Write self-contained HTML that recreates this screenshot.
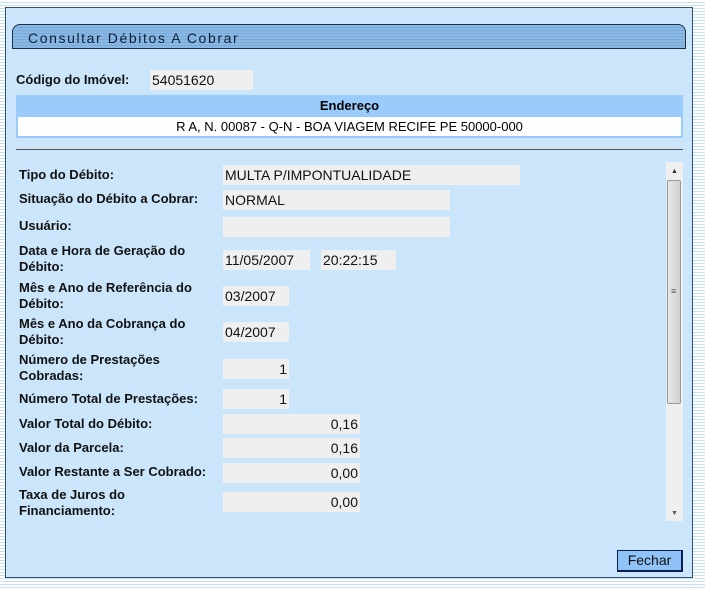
<!DOCTYPE html>
<html><head><meta charset="utf-8"><style>
body{margin:0;width:705px;height:590px;overflow:hidden;background:repeating-linear-gradient(#fff 0,#fff 2px,#c6e0f7 2px,#c6e0f7 3px);font-family:"Liberation Sans",Arial,sans-serif;position:relative}
.panel{position:absolute;left:5px;top:7px;width:686px;height:569px;background:#cbe5fb;border:1px solid #30506e}
.hdr{position:absolute;left:12px;top:24px;width:674px;height:25px;border:1px solid #1d2f44;border-radius:8px 8px 0 0;background:repeating-linear-gradient(#8ab8e4 0,#8ab8e4 2px,#7aaad8 2px,#7aaad8 3px);font-size:14px;letter-spacing:1.6px;color:#0d1f33;line-height:27px;padding-left:15px;box-sizing:border-box}
.a{position:absolute}
.l{position:absolute;left:19px;font-size:13px;font-weight:bold;color:#111;line-height:16px}
.f{position:absolute;left:223px;height:20px;background:#efefef;font-size:14px;line-height:21px;padding:0 2px;box-sizing:border-box;color:#111}
.r{text-align:right}
</style></head><body>
<div class="panel"></div>
<div class="hdr">Consultar Débitos A Cobrar</div>
<div class="l" style="top:72px;left:16px">Código do Imóvel:</div>
<div class="f" style="left:150px;top:70px;width:103px">54051620</div>
<div class="a" style="left:16px;top:95px;width:667px;height:43px;background:#99cbfb"></div>
<div class="a" style="left:16px;top:98px;width:667px;text-align:center;font-size:13px;font-weight:bold;line-height:16px">Endereço</div>
<div class="a" style="left:18px;top:117px;width:663px;height:19px;background:#fff;text-align:center;font-size:13px;line-height:19px">R A, N. 00087 - Q-N - BOA VIAGEM RECIFE PE 50000-000</div>
<div class="a" style="left:16px;top:149px;width:667px;height:1px;background:#555"></div>

<div class="l" style="top:167px">Tipo do Débito:</div>
<div class="f" style="top:165px;width:297px">MULTA P/IMPONTUALIDADE</div>
<div class="l" style="top:191px">Situação do Débito a Cobrar:</div>
<div class="f" style="top:190px;width:227px">NORMAL</div>
<div class="l" style="top:218px">Usuário:</div>
<div class="f" style="top:217px;width:227px"></div>
<div class="l" style="top:243px">Data e Hora de Geração do<br>Débito:</div>
<div class="f" style="top:250px;width:87px">11/05/2007</div>
<div class="f" style="left:321px;top:250px;width:75px">20:22:15</div>
<div class="l" style="top:280px">Mês e Ano de Referência do<br>Débito:</div>
<div class="f" style="top:286px;width:66px">03/2007</div>
<div class="l" style="top:316px">Mês e Ano da Cobrança do<br>Débito:</div>
<div class="f" style="top:322px;width:66px">04/2007</div>
<div class="l" style="top:352px">Número de Prestações<br>Cobradas:</div>
<div class="f r" style="top:359px;width:66px">1</div>
<div class="l" style="top:391px">Número Total de Prestações:</div>
<div class="f r" style="top:389px;width:66px">1</div>
<div class="l" style="top:416px">Valor Total do Débito:</div>
<div class="f r" style="top:414px;width:137px">0,16</div>
<div class="l" style="top:440px">Valor da Parcela:</div>
<div class="f r" style="top:438px;width:137px">0,16</div>
<div class="l" style="top:464px">Valor Restante a Ser Cobrado:</div>
<div class="f r" style="top:463px;width:137px">0,00</div>
<div class="l" style="top:487px">Taxa de Juros do<br>Financiamento:</div>
<div class="f r" style="top:492px;width:137px">0,00</div>

<div class="a" style="left:666px;top:162px;width:17px;height:359px;background:#efefef"></div>
<div class="a" style="left:671px;top:168px;font-size:7px;color:#333">▲</div>
<div class="a" style="left:667px;top:180px;width:14px;height:224px;border:1px solid #999;border-radius:2px;background:linear-gradient(90deg,#e8e8e8,#d0d0d0);box-sizing:border-box"></div>
<div class="a" style="left:671px;top:286px;font-size:9px;color:#555">≡</div>
<div class="a" style="left:671px;top:510px;font-size:7px;color:#555">▼</div>

<div class="a" style="left:617px;top:550px;width:66px;height:22px;background:#8fc3f8;border:1px solid #0a1f55;border-right-width:2px;border-bottom-width:2px;box-sizing:border-box;text-align:center;font-size:14px;line-height:19px;color:#111">Fechar</div>
</body></html>
